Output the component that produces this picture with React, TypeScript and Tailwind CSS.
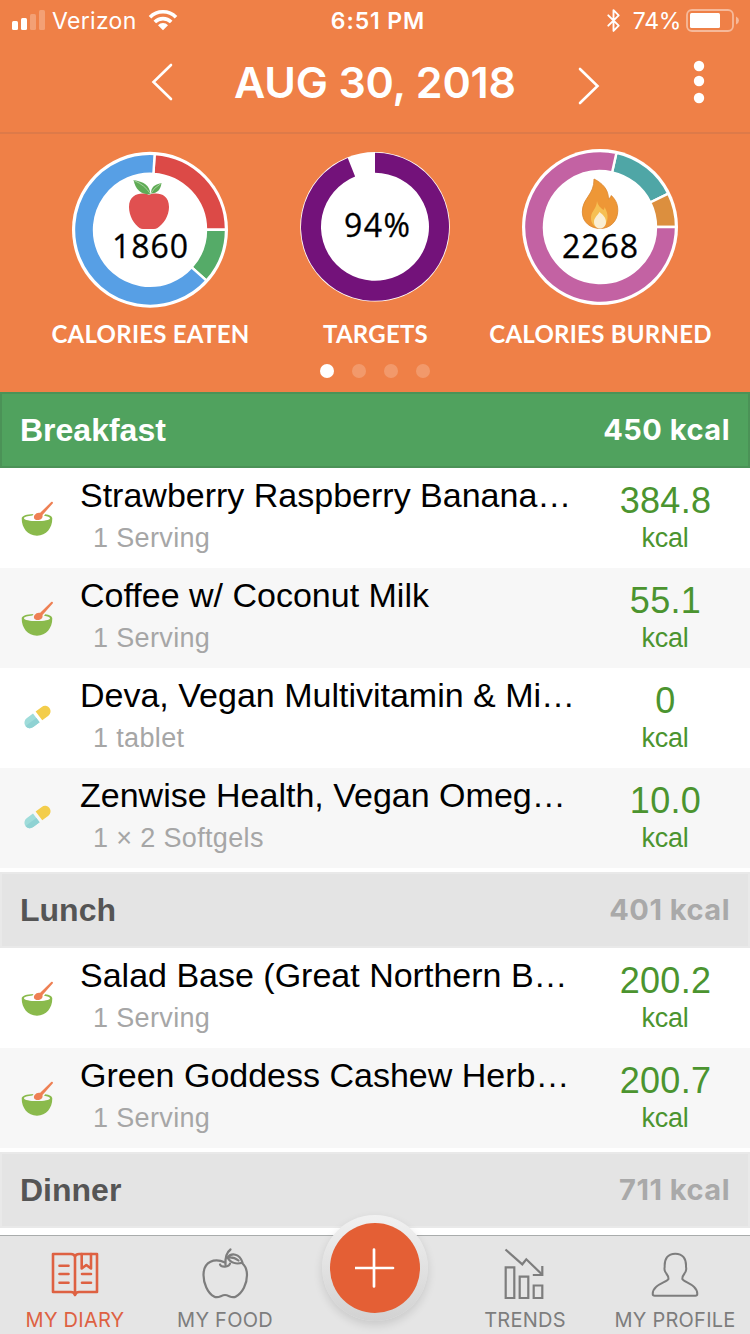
import React from 'react';
import { Bluetooth } from 'lucide-react';

type Slice = { from: number; to: number; color: string };

type FoodItem = {
  name: string;
  amount: string;
  value: string;
  icon: 'bowl' | 'pill';
};

type Meal = {
  title: string;
  total: string;
  active?: boolean;
  items: FoodItem[];
};

const meals: Meal[] = [
  {
    title: 'Breakfast',
    total: '450 kcal',
    active: true,
    items: [
      { name: 'Strawberry Raspberry Banana…', amount: '1 Serving', value: '384.8', icon: 'bowl' },
      { name: 'Coffee w/ Coconut Milk', amount: '1 Serving', value: '55.1', icon: 'bowl' },
      { name: 'Deva, Vegan Multivitamin & Mi…', amount: '1 tablet', value: '0', icon: 'pill' },
      { name: 'Zenwise Health, Vegan Omeg…', amount: '1 × 2 Softgels', value: '10.0', icon: 'pill' },
    ],
  },
  {
    title: 'Lunch',
    total: '401 kcal',
    items: [
      { name: 'Salad Base (Great Northern B…', amount: '1 Serving', value: '200.2', icon: 'bowl' },
      { name: 'Green Goddess Cashew Herb…', amount: '1 Serving', value: '200.7', icon: 'bowl' },
    ],
  },
  { title: 'Dinner', total: '711 kcal', items: [] },
];

// angles are in degrees, clockwise from 12 o'clock
const point = (cx: number, cy: number, r: number, deg: number) => {
  const a = ((deg - 90) * Math.PI) / 180;
  return `${(cx + r * Math.cos(a)).toFixed(2)} ${(cy + r * Math.sin(a)).toFixed(2)}`;
};

const slicePath = (cx: number, cy: number, outer: number, inner: number, s: Slice) => {
  const large = s.to - s.from > 180 ? 1 : 0;
  return `M${point(cx, cy, outer, s.from)} A${outer} ${outer} 0 ${large} 1 ${point(cx, cy, outer, s.to)} L${point(cx, cy, inner, s.to)} A${inner} ${inner} 0 ${large} 0 ${point(cx, cy, inner, s.from)}Z`;
};

const StatusBar = () => (
  <div className="flex h-10 items-start justify-between pt-[7px] pl-3 pr-[10px] text-[23px] leading-7">
    <div className="flex w-[300px] items-start">
      <svg className="mt-[3px]" width="33" height="20" viewBox="0 0 33 20" fill="white">
        <rect x="0" y="11" width="6" height="9" rx="1.5" />
        <rect x="9" y="8" width="6" height="12" rx="1.5" />
        <rect x="18" y="4" width="6" height="16" rx="1.5" opacity="0.25" />
        <rect x="27" y="0" width="6" height="20" rx="1.5" opacity="0.25" />
      </svg>
      <span className="ml-[7px] tracking-[0.3px]">Verizon</span>
      <svg className="ml-[11px] mt-[2px]" width="30" height="22" viewBox="0 0 30 22" fill="none" stroke="white" strokeWidth="3.6">
        <path d="M2 8.2a18.3 18.3 0 0 1 26 0" />
        <path d="M6.8 13a11.6 11.6 0 0 1 16.4 0" />
        <path d="M10 16.2a7 7 0 0 1 10 0L15 21.2z" fill="white" stroke="none" />
      </svg>
    </div>
    <span className="pl-1 font-semibold tracking-[0.9px]">6:51 PM</span>
    <div className="flex w-[300px] items-start justify-end">
      <Bluetooth className="mt-px h-[25px] w-[25px]" strokeWidth={1.8} />
      <span className="ml-[7px] tracking-[-0.3px]">74%</span>
      <svg className="ml-[5px] mt-[2px]" width="54" height="23" viewBox="0 0 54 23">
        <rect x="1" y="1" width="46" height="21" rx="5" fill="none" stroke="white" strokeOpacity="0.45" strokeWidth="1.8" />
        <rect x="4" y="4" width="30" height="15" rx="1.5" fill="white" />
        <path d="M50 7.5q3 1.300 3 4t-3 4z" fill="white" fillOpacity="0.45" />
      </svg>
    </div>
  </div>
);

const DateNav = () => (
  <div className="flex h-[94px] items-start border-b-2 border-[#dd7a49] pl-[150px]">
    <svg className="mt-[22px]" width="24" height="40" viewBox="0 0 24 40" fill="none" stroke="white" strokeWidth="2.6" strokeLinecap="round">
      <path d="M21 3 3.500 20 21 37" />
    </svg>
    <h1 className="mt-[18px] w-[402px] whitespace-nowrap text-center text-[43px] font-semibold leading-[48px] tracking-[-0.2px]">
      AUG 30, 2018
    </h1>
    <svg className="mt-[26px]" width="24" height="40" viewBox="0 0 24 40" fill="none" stroke="white" strokeWidth="2.6" strokeLinecap="round">
      <path d="M4 3 21.500 20 4 37" />
    </svg>
    <svg className="ml-[93px] mt-[20px]" width="12" height="44" viewBox="0 0 12 44" fill="white">
      <circle cx="6" cy="6" r="5.200" />
      <circle cx="6" cy="21" r="5.200" />
      <circle cx="6" cy="38" r="5.200" />
    </svg>
  </div>
);

const AppleFruit = () => (
  <g transform="translate(0 5.500)">
    <path d="M79 41.500c-6-3-20-2-20 12 0 9 5 17 10.500 21q1.500 1 3.500 1h11q2 0 3.500-1c6-4 11.500-12 11.500-21 0-14-13-15-20-12z" fill="#e05050" />
    <path d="M80.500 41c-10 0-15-5-17-14.500 10 2 16 4.500 17 14.500z" fill="#5fab55" />
    <path d="M81 40c0-6 3-9 10.500-10.500-1 7-4 10-10.500 10.500z" fill="#5fab55" />
    <path d="M64 27q11 4.500 16.500 13.500 3-6 10.500-10.500" stroke="#b6dcb0" strokeWidth="0.800" fill="none" />
  </g>
);

const Flame = () => (
  <g>
    <path d="M74 31c8 4 14.500 10 14.500 20 2-1 2.600-3 2.800-3.500 4 4 6.500 8 6.500 15 0 11-8 18-17.500 18s-18-6-18-16.500c0-14 12-17 11.700-33z" fill="#ee9736" stroke="#d9852f" strokeWidth="0.800" />
    <path d="M77 53c1 5 4 7 6.500 9 .8-1 1-2 1-3 2 4 3.500 7 3 11-.5 6-4 10-8 10s-9-4-8.500-11c.4-6 5.600-8 6-16z" fill="#f6bf52" />
    <path d="M79.500 64c4 3 6.500 6 6.500 10s-2.800 6.500-6 6.500-6-2.500-6-6.500c0-4 3-6 5.500-10z" fill="#faeed3" />
  </g>
);

type RingProps = {
  label: string;
  value: string;
  cy: number;
  textX: number;
  textY: number;
  textLength: number;
  outer: number;
  rim: number;
  inner: number;
  gap: number;
  slices: Slice[];
  children?: React.ReactNode;
};

const Ring = ({ label, value, cy, textX, textY, textLength, outer, rim, inner, gap, slices, children }: RingProps) => (
  <div className="flex flex-col items-center">
    <svg width="160" height="162" viewBox="0 0 160 162">
      <circle cx="80" cy={cy} r={rim} fill="white" />
      {slices.map((s) => (
        <path key={s.from} d={slicePath(80, cy, outer, inner, s)} fill={s.color} stroke="white" strokeWidth={gap} />
      ))}
      {children}
      <text
        x={textX}
        y={textY}
        textLength={textLength}
        className="font-['Open_Sans','Noto_Sans',sans-serif] text-[32px]"
        fill="black"
        stroke="black"
        strokeWidth="0.3"
      >
        {value}
      </text>
    </svg>
    <span className="mt-[10px] whitespace-nowrap pl-px font-[Lato,sans-serif] text-2xl font-bold leading-7 tracking-[0.25px]">{label}</span>
  </div>
);

const Summary = () => (
  <section className="h-[258px]">
    <div className="mx-auto grid w-[675px] grid-cols-3 pt-[14px]">
      <Ring
        label="CALORIES EATEN"
        value="1860"
        cy={81.8}
        textX={42}
        textY={110}
        textLength={76}
        outer={76}
        rim={78}
        inner={56}
        gap={2.4}
        slices={[
          { from: 3.5, to: 90, color: '#dc4a47' },
          { from: 90, to: 132, color: '#55ab68' },
          { from: 132, to: 363.5, color: '#579fe5' },
        ]}
      >
        <AppleFruit />
      </Ring>
      <Ring
        label="TARGETS"
        value="94%"
        cy={78.8}
        textX={49}
        textY={89}
        textLength={66}
        outer={74}
        rim={74.8}
        inner={54}
        gap={0}
        slices={[{ from: 0, to: 338.4, color: '#73127a' }]}
      />
      <Ring
        label="CALORIES BURNED"
        value="2268"
        cy={79}
        textX={42}
        textY={110}
        textLength={76}
        outer={76}
        rim={78}
        inner={56}
        gap={2.4}
        slices={[
          { from: 12.5, to: 64, color: '#4fa6a6' },
          { from: 64, to: 90, color: '#dc8f3e' },
          { from: 90, to: 372.5, color: '#c362a3' },
        ]}
      >
        <Flame />
      </Ring>
    </div>
    <div className="mt-[16px] flex justify-center gap-[18px]">
      <span className="h-3.5 w-3.5 rounded-full bg-white" />
      <span className="h-3.5 w-3.5 rounded-full bg-white/20" />
      <span className="h-3.5 w-3.5 rounded-full bg-white/20" />
      <span className="h-3.5 w-3.5 rounded-full bg-white/20" />
    </div>
  </section>
);

const BowlIcon = () => (
  <svg width="36" height="40" viewBox="0 0 36 40">
    <path
      d="M1.700 20.500c0-2.800 5-4.200 11.800-4.500l-1 1.500c-5 .4-8.500 1.400-8.500 2.700 0 1.900 6 2.800 13 2.800s13-.9 13-2.800c0-1.200-2.500-2-6-2.500l1.200-1.400c4.300.6 7.100 1.900 7.100 4.200 0 9.500-6 17.200-15.300 17.200S1.700 30 1.700 20.500z"
      fill="#8aba4c"
    />
    <path d="M31.200 4c1.200-.9 2.300.2 1.500 1.500L22.500 17c.6 3.500-2 5-4.700 5.100-3.500.1-4.800-2.600-3.200-5 1.300-2 3.500-2.800 5.600-2.300z" fill="#ee8054" />
  </svg>
);

const PillIcon = () => (
  <svg width="36" height="40" viewBox="0 0 36 40">
    <g transform="translate(17.500 19) rotate(-37)">
      <path d="M1.800-5.500H9.500a5.500 5.500 0 0 1 0 11H1.800z" fill="#f3cd4b" />
      <path d="M-1.500-5.500H-9.500a5.500 5.500 0 0 0 0 11h8z" fill="#9fdcda" />
      <path d="M-1.500 0H-15a5.500 5.500 0 0 0 5.500 5.500h8z" fill="#8fd2d3" />
    </g>
  </svg>
);

const FoodRow = ({ item }: { item: FoodItem }) => (
  <li className="flex h-[100px] items-start bg-white even:bg-[#f7f7f7]">
    <div className="ml-5 mt-[30px] w-[60px]">{item.icon === 'bowl' ? <BowlIcon /> : <PillIcon />}</div>
    <div className="mt-[7px] w-[500px] whitespace-nowrap">
      <p className="text-[34px] leading-10 text-black">{item.name}</p>
      <p className="ml-[13px] mt-[7px] text-[27px] leading-8 tracking-[0.35px] text-[#a6a6a6]">{item.amount}</p>
    </div>
    <div className="mt-[13px] w-[170px] text-center text-[#4b942f]">
      <p className="pl-px text-[36px] leading-10 tracking-[0.3px]">{item.value}</p>
      <p className="mt-px text-[27px] leading-8 tracking-[-0.3px]">kcal</p>
    </div>
  </li>
);

const MealSection = ({ meal }: { meal: Meal }) => (
  <section>
    <header
      className={`flex h-[76px] items-center justify-between border-2 px-[18px] leading-9 ${
        meal.active ? 'border-[#4b9257] bg-[#50a25e] text-white' : 'border-[#e9e9e9] bg-[#e4e4e4] text-[#555]'
      }`}
    >
      <h2 className="text-[32px] font-bold">{meal.title}</h2>
      <span className={`font-[Inter,sans-serif] text-[29px] font-bold tracking-[0.5px] ${meal.active ? 'text-white' : 'text-[#a9a9a9]'}`}>
        {meal.total}
      </span>
    </header>
    <ul>
      {meal.items.map((item) => (
        <FoodRow key={item.name} item={item} />
      ))}
    </ul>
  </section>
);

const DiaryIcon = () => (
  <svg width="50" height="54" viewBox="0 -3 50 54" fill="none" stroke="currentColor" strokeWidth="2.6" strokeLinecap="round" strokeLinejoin="round">
    <path d="M25 6.500Q24 4 21 4H3v38h18q3 0 4 3 1-3 4-3h18V4H29q-3 0-4 2.500zM25 6.500V43" />
    <path d="M31.700 4v14.500l4.600-3.500 4.700 3.500V4" />
    <path d="M9.500 15.700h9M9.500 24h9M9.500 32.700h9M32 24h9M32 32.700h9" />
  </svg>
);

const FoodIcon = () => (
  <svg width="50" height="54" viewBox="0 0 50 54" fill="none" stroke="currentColor" strokeWidth="2.2" strokeLinecap="round" strokeLinejoin="round">
    <path d="M25 15.500C15 11 3.500 14 3.500 28c0 8 4 18 10.500 21.500 4.500 2.500 7-1.500 11-1.500s6.500 4 11 1.500C42.500 46 47 37 47 28c0-6-2-9.500-5-12" />
    <path d="M30.500 2.500c-4 3-5.500 8-5 15.500" />
    <path d="M27.500 10.500c4-5 12-4 15 5-6 2-12 .5-15-5zM27.500 10.500c4-.5 8 .5 11 3" />
    <path d="M20 17.500c1 3 9 3 10-1" />
  </svg>
);

const TrendsIcon = () => (
  <svg width="50" height="54" viewBox="0 0 50 54" fill="none" stroke="currentColor" strokeWidth="2.2">
    <path d="M5.700 20.300h8.600V51H5.700zM19.700 29.700h8.600V51h-8.600zM33.700 38.500h8.600V51h-8.600z" />
    <path d="M5.500 2.500 22.300 17.300l4-5 16 15.400" />
    <path d="M42.300 19v9h-9.500" />
  </svg>
);

const ProfileIcon = () => (
  <svg width="50" height="54" viewBox="0 0 50 54" fill="none" stroke="currentColor" strokeWidth="2" strokeLinejoin="round">
    <path d="M18.500 32c0-2.500-.8-3.800-2.200-5.500-1.500-2-2.300-4-1.600-6.500C14.200 11.500 18 6.700 25.300 6.700S36.500 11.500 36 20c.7 2.500 0 4.500-1.500 6.500-1.400 1.700-2.200 3-2.200 5.500 2 3.500 15 5.500 15 15 0 1.200-.8 1.700-2 1.700H4.700c-1.200 0-2-.5-2-1.700 0-9.500 13.800-11.500 15.800-15z" />
  </svg>
);

const Tab = ({ label, active, children }: { label: string; active?: boolean; children: React.ReactNode }) => (
  <button className={`flex flex-col items-center pt-[11px] ${active ? 'text-[#de6142]' : 'text-[#7d7d7d]'}`}>
    {children}
    <span className="mt-[7px] whitespace-nowrap text-[20px] leading-6 tracking-[0.25px]">{label}</span>
  </button>
);

const TabBar = () => (
  <nav className="mt-[7px] grid h-[99px] grid-cols-5 border-t border-[#a9acac] bg-[#e5e5e5] font-[Inter,sans-serif]">
    <Tab label="MY DIARY" active>
      <DiaryIcon />
    </Tab>
    <Tab label="MY FOOD">
      <FoodIcon />
    </Tab>
    <div className="flex justify-center">
      <button className="-mt-[21px] flex h-[106px] w-[106px] items-center justify-center rounded-full bg-linear-to-b from-[#f1f1f1] to-[#d2d2d2] shadow-[0_4px_10px_rgba(0,0,0,0.12)]">
        <span className="flex h-[90px] w-[90px] items-center justify-center rounded-full bg-[#e45f35]">
          <svg width="40" height="40" viewBox="0 0 40 40" stroke="white" strokeWidth="2.7" strokeLinecap="round">
            <path d="M19 1.500v37M.5 20h37.500" />
          </svg>
        </span>
      </button>
    </div>
    <Tab label="TRENDS">
      <TrendsIcon />
    </Tab>
    <Tab label="MY PROFILE">
      <ProfileIcon />
    </Tab>
  </nav>
);

export default function App() {
  return (
    <div className="h-[1334px] w-[750px] overflow-hidden bg-white font-['Liberation_Sans',Arial,sans-serif]">
      <div className="bg-[#ef8047] font-[Inter,sans-serif] text-white">
        <StatusBar />
        <DateNav />
        <Summary />
      </div>
      <main className="flex flex-col gap-1">
        {meals.map((meal) => (
          <MealSection key={meal.title} meal={meal} />
        ))}
      </main>
      <TabBar />
    </div>
  );
}
